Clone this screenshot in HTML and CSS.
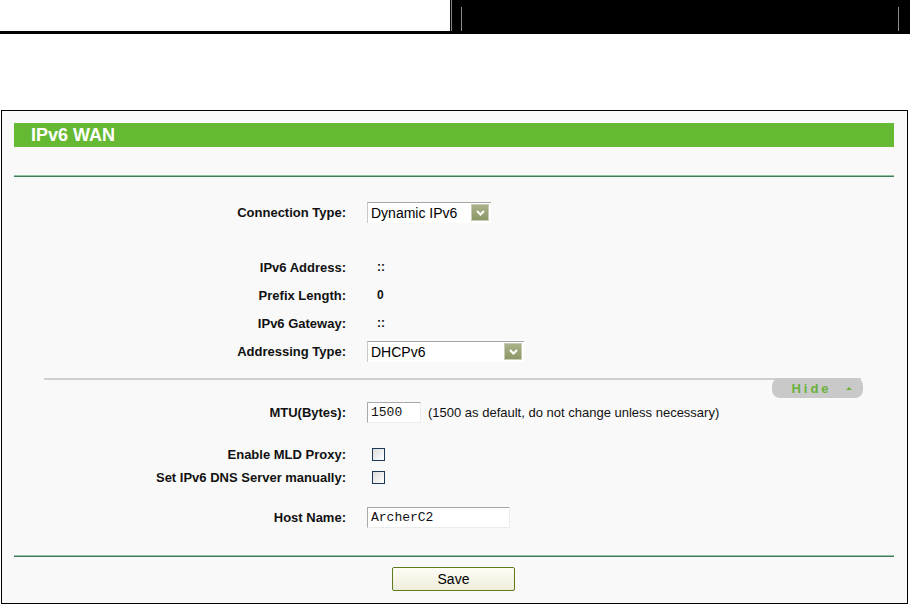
FILE: index.html
```html
<!DOCTYPE html>
<html>
<head>
<meta charset="utf-8">
<link rel="stylesheet" href="styles.css">
</head>
<body>
<div class="topbar">
  <div class="top-left"></div>
  <div class="top-right">
    <span class="vline vline-full"></span>
    <span class="vline vline-a"></span>
    <span class="top-fill"></span>
    <span class="vline vline-b"></span>
  </div>
</div>

<div class="panel">
  <div class="title-bar">IPv6 WAN</div>
  <div class="green-line first-line"></div>

  <div class="row row-conn">
    <div class="label">Connection Type:</div>
    <div class="value">
      <div class="select sel-conn"><span class="sel-text">Dynamic IPv6</span><span class="sel-btn"><svg width="11" height="8" viewBox="0 0 11 8"><path d="M2 2 L5.5 5.5 L9 2" fill="none" stroke="#fff" stroke-width="2"/></svg></span></div>
    </div>
  </div>

  <div class="row row-info first-info">
    <div class="label">IPv6 Address:</div>
    <div class="value bold">::</div>
  </div>
  <div class="row row-info">
    <div class="label">Prefix Length:</div>
    <div class="value bold">0</div>
  </div>
  <div class="row row-info">
    <div class="label">IPv6 Gateway:</div>
    <div class="value bold">::</div>
  </div>
  <div class="row row-info">
    <div class="label">Addressing Type:</div>
    <div class="value">
      <div class="select sel-addr"><span class="sel-text">DHCPv6</span><span class="sel-btn"><svg width="11" height="8" viewBox="0 0 11 8"><path d="M2 2 L5.5 5.5 L9 2" fill="none" stroke="#fff" stroke-width="2"/></svg></span></div>
    </div>
  </div>

  <div class="hide-row">
    <div class="hide-pill"><span class="hide-text">Hide</span><span class="hide-caret"></span></div>
  </div>

  <div class="row row-mtu">
    <div class="label">MTU(Bytes):</div>
    <div class="value">
      <div class="textbox tb-mtu">1500</div>
      <span class="note">(1500 as default, do not change unless necessary)</span>
    </div>
  </div>

  <div class="row row-check first-check">
    <div class="label">Enable MLD Proxy:</div>
    <div class="value"><span class="checkbox"></span></div>
  </div>
  <div class="row row-check">
    <div class="label">Set IPv6 DNS Server manually:</div>
    <div class="value"><span class="checkbox"></span></div>
  </div>

  <div class="row row-host">
    <div class="label">Host Name:</div>
    <div class="value"><div class="textbox tb-host">ArcherC2</div></div>
  </div>

  <div class="green-line bottom-line"></div>

  <div class="actions">
    <div class="save-btn">Save</div>
  </div>
</div>
</body>
</html>
```

FILE: styles.css
```css
* { box-sizing: border-box; }

html, body {
  margin: 0;
  padding: 0;
  background: #ffffff;
  font-family: "Liberation Sans", Arial, sans-serif;
}

/* ---------- top bar ---------- */
.topbar {
  display: flex;
  height: 34px;
}
.top-left {
  width: 450px;
  background: #fff;
  border-bottom: 3px solid #000;
}
.top-right {
  flex: 1;
  background: #000;
  display: flex;
  align-items: flex-start;
}
.vline {
  display: block;
  width: 1px;
  background: #8a8a8a;
}
.vline-full {
  height: 31px;
  margin-left: 1px;
}
.vline-a {
  height: 24px;
  margin-top: 7px;
  margin-left: 9px;
}
.top-fill { flex: 1; }
.vline-b {
  height: 24px;
  margin-top: 7px;
  margin-right: 11px;
}

/* ---------- panel ---------- */
.panel {
  margin: 76px 0 0 1px;
  width: 907px;
  height: 494px;
  border: 1px solid #000;
  background: #f9f9f9;
  padding-top: 12px;
}

.title-bar {
  margin: 0 13px 0 12px;
  height: 24px;
  background: #66b933;
  color: #fff;
  font-weight: bold;
  font-size: 18px;
  line-height: 24px;
  padding-left: 17px;
}

.green-line {
  margin: 0 13px 0 12px;
  height: 2px;
  border-top: 1px solid #93c3a3;
  border-bottom: 1px solid #3f7d5a;
}
.first-line { margin-top: 28px; }

/* ---------- rows ---------- */
.row {
  display: grid;
  grid-template-columns: 344px 1fr;
  column-gap: 21px;
  align-items: center;
  height: 28px;
  font-size: 13px;
  color: #111;
}
.label {
  text-align: right;
  font-weight: bold;
}
.value {
  display: flex;
  align-items: center;
}
.bold { font-weight: bold; padding-left: 10px; font-size: 12px; }

.row-conn { margin-top: 21px; }
.first-info { margin-top: 27px; }

/* select imitation */
.select {
  position: relative;
  height: 21px;
  background: #fff;
  border-top: 1px solid #a5a5a5;
  border-left: 1px solid #c9c9c9;
  display: flex;
  align-items: center;
  font-size: 14px;
  color: #000;
  padding-left: 3px;
}
.sel-conn { width: 124px; }
.sel-addr { width: 157px; }
.sel-text { flex: 1; }
.sel-btn {
  width: 18px;
  height: 17px;
  margin-right: 2px;
  background: linear-gradient(#a9b28a, #8b9766);
  border: 1px solid #c8cdb5;
  display: flex;
  align-items: center;
  justify-content: center;
}

/* hide row */
.hide-row {
  margin: 13px 46px 0 42px;
  height: 20px;
  border-top: 2px solid #cfcfcf;
  display: flex;
  justify-content: flex-end;
}
.hide-pill {
  margin-top: -2px;
  margin-right: -2px;
  width: 91px;
  height: 20px;
  border-radius: 8px;
  background: #c9c9c9;
  display: flex;
  align-items: center;
  justify-content: center;
  gap: 14px;
  padding-left: 8px;
}
.hide-text {
  color: #6ab23a;
  font-weight: bold;
  font-size: 13px;
  letter-spacing: 3px;
}
.hide-caret {
  width: 0;
  height: 0;
  border-left: 3px solid transparent;
  border-right: 3px solid transparent;
  border-bottom: 3px solid #6ab23a;
}

/* text boxes */
.textbox {
  height: 21px;
  background: #fff;
  border-top: 1px solid #a9a9a9;
  border-left: 1px solid #a9a9a9;
  border-right: 1px solid #ececec;
  border-bottom: 1px solid #ececec;
  font-family: "Liberation Mono", "Courier New", monospace;
  font-size: 13px;
  color: #111;
  line-height: 19px;
  padding-left: 3px;
}
.tb-mtu { width: 54px; }
.tb-host { width: 143px; }
.note {
  margin-left: 7px;
  font-size: 13px;
  color: #111;
}

.first-check { margin-top: 17px; }
.row-check { height: 23px; }
.checkbox {
  display: block;
  width: 13px;
  height: 13px;
  margin-left: 5px;
  border: 1px solid #1c3a56;
  background: linear-gradient(135deg, #dcdcdc, #ffffff);
}

.row-host { margin-top: 14px; }

.bottom-line { margin-top: 24px; }

.actions {
  display: flex;
  justify-content: center;
  margin-top: 10px;
}
.save-btn {
  margin-left: -2px;
  width: 123px;
  height: 24px;
  border: 1px solid #5e7a1c;
  border-radius: 2px;
  background: linear-gradient(#fefdf6, #efedda);
  font-size: 14px;
  color: #000;
  text-align: center;
  line-height: 22px;
}
```
